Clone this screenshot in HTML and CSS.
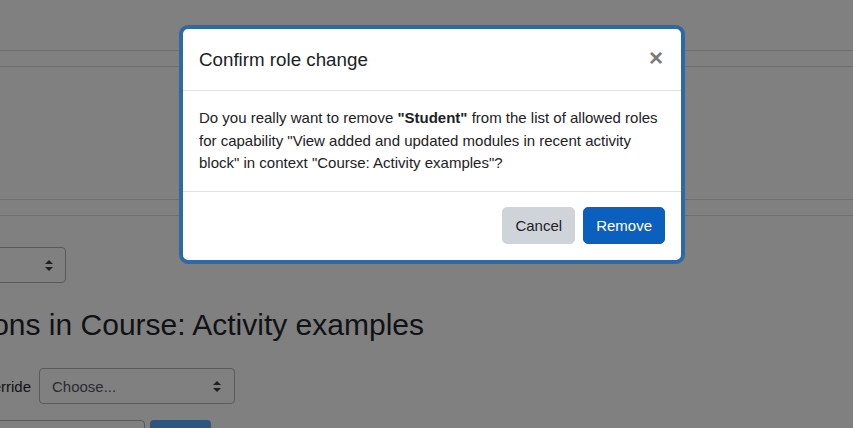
FILE: index.html
```html
<!DOCTYPE html>
<html lang="en">
<head>
<meta charset="utf-8">
<title>Confirm role change</title>
<link rel="stylesheet" href="styles.css">
</head>
<body>
<div class="page">
  <div class="top-space"></div>
  <div class="band"></div>
  <div class="mid-space"></div>
  <div class="band"></div>

  <div class="cut cut-select">
    <div class="select select-wide"><span class="select-text">Student</span><span class="arrows"></span></div>
  </div>

  <div class="cut cut-heading">
    <h2 class="heading">Permissions in Course: Activity examples</h2>
  </div>

  <div class="override-row">
    <div class="cut cut-label"><span class="label">Advanced role override</span></div>
    <div class="select select-choose"><span class="select-text">Choose...</span><span class="arrows"></span></div>
  </div>

  <div class="search-row">
    <div class="cut cut-input"><div class="input"></div></div>
    <div class="go-btn"></div>
  </div>
</div>

<div class="modal" role="dialog" aria-labelledby="modal-title">
  <div class="modal-header">
    <h5 class="modal-title" id="modal-title">Confirm role change</h5>
    <button class="close" type="button" aria-label="Close">&times;</button>
  </div>
  <div class="modal-body">
    Do you really want to remove <strong>"Student"</strong> from the list of allowed roles for capability "View added and updated modules in recent activity block" in context "Course: Activity examples"?
  </div>
  <div class="modal-footer">
    <button class="btn btn-secondary" type="button">Cancel</button>
    <button class="btn btn-primary" type="button">Remove</button>
  </div>
</div>
</body>
</html>
```

FILE: styles.css
```css
* { box-sizing: border-box; }

html, body {
  margin: 0;
  padding: 0;
  width: 853px;
  height: 428px;
  overflow: hidden;
}

body {
  background: #808080;
  font-family: "Liberation Sans", Arial, sans-serif;
  color: #1d2125;
  font-size: 15px;
}

/* ---------- dimmed background page ---------- */
.page {
  display: flex;
  flex-direction: column;
  height: 428px;
  overflow: hidden;
}

.top-space { height: 50px; flex-shrink: 0; }
.mid-space { height: 132px; flex-shrink: 0; }

.band {
  height: 17px;
  flex-shrink: 0;
  border-top: 1px solid #6f6f6f;
  border-bottom: 1px solid #6f6f6f;
}

/* containers whose content is clipped by the left edge of the window:
   items are right-aligned so they overflow to the left */
.cut {
  display: flex;
  justify-content: flex-end;
  white-space: nowrap;
  flex-shrink: 0;
}

.cut-select {
  width: 66px;
  margin-top: 31px;
}

.select {
  height: 36px;
  border: 1px solid #5a5a5a;
  border-radius: 4px;
  display: flex;
  align-items: center;
  justify-content: space-between;
  padding: 0 12px 0 12px;
  flex-shrink: 0;
}

.select-wide { width: 160px; }

.select-text {
  font-size: 15px;
  color: #2a2c2e;
}

.arrows {
  position: relative;
  width: 8px;
  height: 11px;
}
.arrows::before,
.arrows::after {
  content: "";
  position: absolute;
  left: 0;
  border-left: 4px solid transparent;
  border-right: 4px solid transparent;
}
.arrows::before {
  top: 0;
  border-bottom: 4px solid #1e1f20;
}
.arrows::after {
  bottom: 0;
  border-top: 4px solid #1e1f20;
}

.cut-heading {
  width: 424px;
  margin-top: 24px;
}

.heading {
  margin: 0;
  font-size: 30px;
  font-weight: 400;
  line-height: 36px;
  color: #101214;
  flex-shrink: 0;
}

.override-row {
  display: flex;
  align-items: center;
  gap: 8px;
  margin-top: 25px;
  flex-shrink: 0;
}

.cut-label { width: 31px; }

.label {
  font-size: 15px;
  color: #101214;
  flex-shrink: 0;
}

.select-choose {
  width: 196px;
  padding-right: 13px;
}

.search-row {
  display: flex;
  gap: 5px;
  margin-top: 16px;
  flex-shrink: 0;
}

.cut-input { width: 145px; }

.input {
  width: 220px;
  height: 36px;
  border: 1px solid #5a5a5a;
  border-radius: 4px;
  flex-shrink: 0;
}

.go-btn {
  width: 61px;
  height: 36px;
  background: #2c5580;
  border-radius: 4px;
}

/* ---------- modal (overlay) ---------- */
.modal {
  position: absolute;
  left: 179px;
  top: 25px;
  width: 506px;
  background: #fff;
  border: 4px solid #2d68a8;
  border-radius: 9px;
  display: flex;
  flex-direction: column;
}

.modal-header {
  display: flex;
  align-items: center;
  justify-content: space-between;
  padding: 16px;
  border-bottom: 1px solid #dee2e6;
}

.modal-title {
  margin: 0;
  font-size: 18.75px;
  font-weight: 400;
  line-height: 29px;
  color: #1d2125;
}

.close {
  background: none;
  border: 0;
  padding: 0;
  margin: -3px 2px 0 0;
  font-family: "Liberation Sans", Arial, sans-serif;
  font-size: 24px;
  font-weight: 700;
  line-height: 1;
  color: #7a7a7a;
  cursor: pointer;
}

.modal-body {
  padding: 16px 16px 16px;
  font-size: 15px;
  line-height: 22.5px;
  color: #1d2125;
}

.modal-body strong { font-weight: 700; }

.modal-footer {
  display: flex;
  justify-content: flex-end;
  gap: 8px;
  padding: 15px 16px 16px;
  border-top: 1px solid #dee2e6;
}

.btn {
  font-family: "Liberation Sans", Arial, sans-serif;
  font-size: 15px;
  line-height: 23px;
  padding: 6px 12px;
  border: 1px solid transparent;
  border-radius: 5px;
  cursor: pointer;
}

.btn-secondary {
  background: #ced4da;
  border-color: #ced4da;
  color: #1d2125;
}

.btn-primary {
  background: #0b5fbe;
  border-color: #0b5fbe;
  color: #fff;
}
```
